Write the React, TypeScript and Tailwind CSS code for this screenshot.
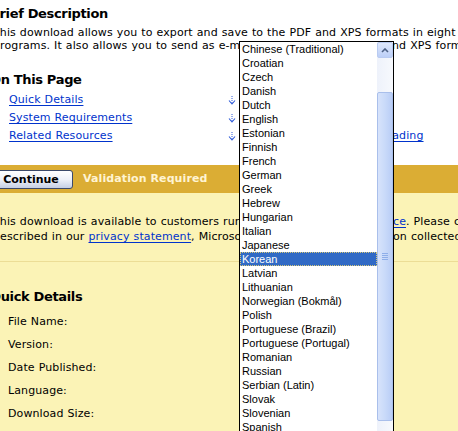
import React from 'react';

const languages = [
  'Chinese (Traditional)',
  'Croatian',
  'Czech',
  'Danish',
  'Dutch',
  'English',
  'Estonian',
  'Finnish',
  'French',
  'German',
  'Greek',
  'Hebrew',
  'Hungarian',
  'Italian',
  'Japanese',
  'Korean',
  'Latvian',
  'Lithuanian',
  'Norwegian (Bokmål)',
  'Polish',
  'Portuguese (Brazil)',
  'Portuguese (Portugal)',
  'Romanian',
  'Russian',
  'Serbian (Latin)',
  'Slovak',
  'Slovenian',
  'Spanish',
  'Swedish',
  'Thai',
];

const selected = 'Korean';

const JumpArrow = () => (
  <svg width="8" height="10" viewBox="0 0 8 10" className="shrink-0 mt-[2px]">
    <path d="M4 0v7" stroke="#2f5bd8" strokeWidth="1" strokeDasharray="1 1" />
    <path d="M1 4.5l3 3.5 3-3.5" stroke="#2f5bd8" strokeWidth="1.1" fill="none" />
  </svg>
);

const Link = ({ children }: { children: React.ReactNode }) => (
  <a href="#" className="text-[#0033cc] underline underline-offset-[2px]">
    {children}
  </a>
);

const jumpLinks = [
  ['Quick Details', 'Overview'],
  ['System Requirements', 'Instructions'],
  ['Related Resources', 'What Others Are Downloading'],
];

const details = ['File Name:', 'Version:', 'Date Published:', 'Language:', 'Download Size:'];

function LanguageList() {
  return (
    <div className="absolute left-[239px] top-[41px] z-10 w-[155px] h-[420px] bg-white border border-black flex font-['Liberation_Sans',Arial,sans-serif] text-[11px] text-black">
      <ul className="flex-1 min-w-0">
        {languages.map((lang) => (
          <li
            key={lang}
            className={
              lang === selected
                ? 'h-[14px] leading-[14px] pl-[2px] bg-[#316ac5] text-white outline outline-1 outline-dotted outline-[#d6c77a] -outline-offset-1 whitespace-nowrap'
                : 'h-[14px] leading-[14px] pl-[2px] whitespace-nowrap'
            }
          >
            {lang}
          </li>
        ))}
      </ul>
      <div className="w-[16px] shrink-0 flex flex-col bg-gradient-to-r from-[#eef2fb] to-[#f7f9fd]">
        <div className="h-[16px] rounded-[2px] border border-[#b9cbf1] bg-gradient-to-b from-[#dfe8fc] to-[#bccff7] flex items-center justify-center">
          <svg width="8" height="5" viewBox="0 0 8 5">
            <path d="M1 4l3-3 3 3" stroke="#4d6185" strokeWidth="1.6" fill="none" />
          </svg>
        </div>
        <div className="h-[34px]" />
        <div className="h-[329px] rounded-[2px] border border-[#a9bfeb] bg-gradient-to-r from-[#d7e3fb] via-[#c9daf9] to-[#b9cdf6] flex flex-col items-center justify-center gap-[1px]">
          <div className="w-[6px] h-[1px] bg-[#8eaee9]" />
          <div className="w-[6px] h-[1px] bg-[#8eaee9]" />
          <div className="w-[6px] h-[1px] bg-[#8eaee9]" />
          <div className="w-[6px] h-[1px] bg-[#8eaee9]" />
        </div>
      </div>
    </div>
  );
}

export default function App() {
  return (
    <div className="relative w-[458px] h-[431px] overflow-hidden bg-white font-['DejaVu_Sans',Verdana,sans-serif] text-[11px] text-black">
      {/* white section */}
      <div className="h-[165px] -ml-[10px]">
        <h2 className="pt-[4px] h-[24px] leading-[20px] text-[13px] font-bold tracking-[-0.35px] whitespace-nowrap">
          Brief Description
        </h2>
        <div className="mt-[2px] pl-[3px] leading-[13px] whitespace-nowrap tracking-[0.1px] [word-spacing:0.4px]">
          <div>This download allows you to export and save to the PDF and XPS formats in eight</div>
          <div className="flex">
            <span className="w-[399px] shrink-0 overflow-hidden">
              programs. It also allows you to send as e-mail attachments in the PDF a
            </span>
            <span>nd XPS formats</span>
          </div>
        </div>

        <h2 className="mt-[18px] h-[20px] leading-[20px] text-[13px] font-bold tracking-[-0.35px] whitespace-nowrap">
          On This Page
        </h2>
        <div className="mt-[1px] pl-[19px] tracking-[0.1px] [word-spacing:0.4px]">
          {jumpLinks.map(([left, right]) => (
            <div key={left} className="h-[18px] leading-[18px] flex whitespace-nowrap">
              <div className="w-[227px] shrink-0 flex items-center justify-between">
                <Link>{left}</Link>
                <JumpArrow />
              </div>
              <div className="pl-[17px]">
                <Link>{right}</Link>
              </div>
            </div>
          ))}
        </div>
      </div>

      {/* validation bar */}
      <div className="h-[28px] bg-[#dbad34] flex items-center gap-[10px]">
        <button className="-ml-[11px] w-[84px] h-[19px] rounded-[3px] border border-[#3c4a6b] bg-gradient-to-b from-white via-[#eef1f8] to-[#c5cfe4] font-bold text-[11px] leading-[17px] text-black text-center">
          Continue
        </button>
        <span className="font-bold text-[#fff4d2] whitespace-nowrap tracking-[0.1px]">Validation Required</span>
      </div>

      {/* yellow section */}
      <div className="h-[238px] bg-[#fbf3b6]">
        <div className="-ml-[10px] pt-[21px] pl-[3px] leading-[15px] whitespace-nowrap tracking-[0.1px] [word-spacing:0.4px]">
          <div className="flex">
            <span className="w-[400px] shrink-0 overflow-hidden">
              This download is available to customers running genuine Microsoft Windows. Learn more about the Genuine Advanta
            </span>
            <span>
              <Link>ce</Link>. Please click Continue
            </span>
          </div>
          <div className="flex">
            <span className="w-[400px] shrink-0 overflow-hidden">
              described in our <Link>privacy statement</Link>, Microsoft does not use the informati
            </span>
            <span>on collected</span>
          </div>
        </div>
        <div className="mt-[17px] h-[1px] bg-[#ecdd96]" />
        <div className="-ml-[10px]">
          <h2 className="mt-[25px] h-[20px] leading-[20px] text-[13px] font-bold tracking-[-0.35px] whitespace-nowrap">
            Quick Details
          </h2>
          <div className="mt-[3px] pl-[18px] tracking-[0.1px] [word-spacing:0.4px]">
            {details.map((d) => (
              <div key={d} className="h-[23px] leading-[23px] whitespace-nowrap">
                {d}
              </div>
            ))}
          </div>
        </div>
      </div>

      <LanguageList />
    </div>
  );
}
